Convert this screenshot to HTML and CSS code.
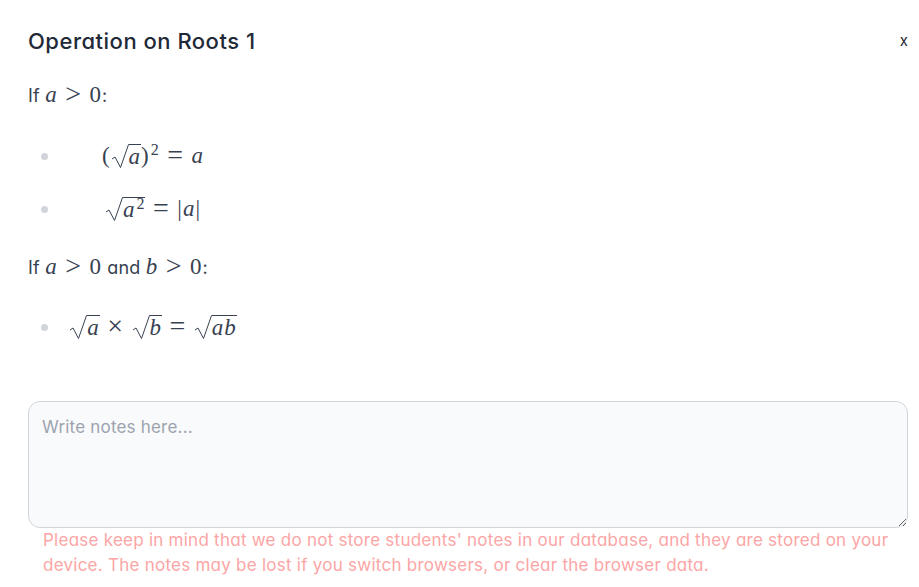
FILE: index.html
```html
<!DOCTYPE html>
<html lang="en">
<head>
<meta charset="utf-8">
<title>Operation on Roots 1</title>
<link rel="stylesheet" href="styles.css">
</head>
<body>
<main class="modal">
  <header class="head">
    <h1 class="title">Operation on Roots 1</h1>
    <button class="close" type="button">x</button>
  </header>
  <p class="para">If <span class="math"><i>a</i><span class="op">&gt;</span>0</span>:</p>
  <ul class="list">
    <li class="item"><span class="math centered">(<span class="sqrt"><svg class="surd" viewBox="0 0 18 25" preserveAspectRatio="none"><path d="M1 15l3-2 5.500 10.500L17.500 .5H18"/></svg><span class="rad"><i>a</i></span></span>)<sup>2</sup><span class="op">=</span><i>a</i></span></li>
    <li class="item"><span class="math centered"><span class="sqrt"><svg class="surd" viewBox="0 0 18 25" preserveAspectRatio="none"><path d="M1 15l3-2 5.500 10.500L17.500 .5H18"/></svg><span class="rad"><i>a</i><sup>2</sup></span></span><span class="op">=</span>|<i>a</i>|</span></li>
  </ul>
  <p class="para second">If <span class="math"><i>a</i><span class="op">&gt;</span>0</span> and <span class="math"><i>b</i><span class="op">&gt;</span>0</span>:</p>
  <ul class="list third">
    <li class="item"><span class="math centered"><span class="sqrt"><svg class="surd" viewBox="0 0 18 25" preserveAspectRatio="none"><path d="M1 15l3-2 5.500 10.500L17.500 .5H18"/></svg><span class="rad"><i>a</i></span></span><span class="op">×</span><span class="sqrt"><svg class="surd" viewBox="0 0 18 25" preserveAspectRatio="none"><path d="M1 15l3-2 5.500 10.500L17.500 .5H18"/></svg><span class="rad"><i>b</i></span></span><span class="op">=</span><span class="sqrt"><svg class="surd" viewBox="0 0 18 25" preserveAspectRatio="none"><path d="M1 15l3-2 5.500 10.500L17.500 .5H18"/></svg><span class="rad"><i>ab</i></span></span></span></li>
  </ul>
  <textarea class="notes" placeholder="Write notes here..."></textarea>
  <p class="warning">Please keep in mind that we do not store students' notes in our database, and they are stored on your device. The notes may be lost if you switch browsers, or clear the browser data.</p>
</main>
</body>
</html>
```
FILE: styles.css
```css
html, body {
  margin: 0;
  padding: 0;
  background: #fff;
}
.modal {
  box-sizing: border-box;
  width: 919px;
  height: 587px;
  padding: 26px 11px 0 28px;
  font-family: "Inter", sans-serif;
  font-feature-settings: "cv11" 1;
  color: #374151;
  overflow: hidden;
}
.head {
  display: flex;
  justify-content: space-between;
  align-items: center;
  height: 30px;
}
.title {
  margin: 0;
  font-size: 22px;
  line-height: 30px;
  font-weight: 450;
  letter-spacing: .5px;
  color: #1f2937;
}
.close {
  border: 0;
  background: none;
  padding: 0;
  font: 15px/30px "Inter", sans-serif;
  color: #1f2937;
}
.para {
  margin: 25px 0 0;
  font-size: 18px;
  letter-spacing: .2px;
  line-height: 28px;
}
.second {
  margin-top: 17px;
}
.list {
  list-style: none;
  margin: 20px 0 0;
  padding: 0 0 0 41px;
}
.third {
  margin-top: 19px;
}
.item {
  position: relative;
  height: 53px;
  line-height: 52px;
}
.item::before {
  content: "";
  position: absolute;
  left: -28px;
  top: 23px;
  width: 7px;
  height: 7px;
  border-radius: 50%;
  background: #d1d5db;
}
.math {
  font-family: "Liberation Serif", serif;
  font-size: 23px;
  letter-spacing: 1px;
  color: #374151;
}
.centered {
  display: inline-block;
  width: 168px;
  text-align: center;
  white-space: nowrap;
}
.op {
  margin: 0 7.500px;
  font-size: 28px;
  line-height: 0;
  vertical-align: -1px;
}
.sqrt {
  display: inline-flex;
  align-items: flex-end;
  vertical-align: -6px;
  height: 25px;
  line-height: 24px;
}
.surd {
  width: 18px;
  height: 25px;
  flex: none;
}
.surd path {
  fill: none;
  stroke: #374151;
  stroke-width: 1;
}
.rad {
  border-top: 1px solid #374151;
  height: 24px;
}
sup {
  margin-left: 1px;
  font-size: 16px;
  line-height: 0;
  vertical-align: 8px;
}
.notes {
  display: block;
  box-sizing: border-box;
  width: 880px;
  height: 127px;
  margin: 47px 0 0;
  padding: 12px 13px;
  border: 1px solid #d1d5db;
  border-radius: 12px;
  background: #f9fafb;
  font-family: "Inter", sans-serif;
  font-feature-settings: "cv11" 1;
  font-size: 17px;
  letter-spacing: .2px;
  line-height: 26px;
  color: #374151;
  outline: none;
}
.notes::placeholder {
  color: #9ca3af;
  opacity: 1;
}
.warning {
  margin: 0;
  padding: 0 0 0 15px;
  font-size: 17px;
  letter-spacing: .25px;
  line-height: 25px;
  color: #fca5a5;
}
```
